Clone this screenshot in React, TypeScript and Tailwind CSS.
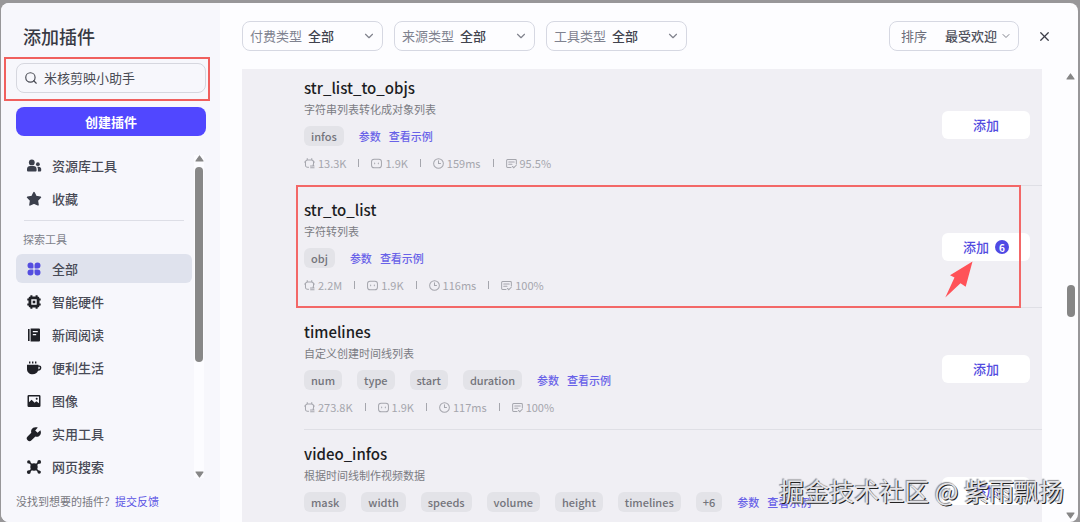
import React, { useState } from "react";
import { ChevronDown, Search, X } from "lucide-react";

type Tool = {
  name: string;
  description: string;
  params: string[];
  stats?: { calls: string; bots: string; latency: string; success: string };
  count?: number;
  marked?: boolean;
};

const tools: Tool[] = [
  {
    name: "str_list_to_objs",
    description: "字符串列表转化成对象列表",
    params: ["infos"],
    stats: { calls: "13.3K", bots: "1.9K", latency: "159ms", success: "95.5%" },
  },
  {
    name: "str_to_list",
    description: "字符转列表",
    params: ["obj"],
    stats: { calls: "2.2M", bots: "1.9K", latency: "116ms", success: "100%" },
    count: 6,
    marked: true,
  },
  {
    name: "timelines",
    description: "自定义创建时间线列表",
    params: ["num", "type", "start", "duration"],
    stats: { calls: "273.8K", bots: "1.9K", latency: "117ms", success: "100%" },
  },
  {
    name: "video_infos",
    description: "根据时间线制作视频数据",
    params: ["mask", "width", "speeds", "volume", "height", "timelines", "+6"],
  },
];

function Glyph({ children }: { children: React.ReactNode }) {
  return (
    <svg viewBox="0 0 16 16" className="size-4 shrink-0" fill="currentColor" aria-hidden="true">
      {children}
    </svg>
  );
}

const icons = {
  team: (
    <Glyph>
      <circle cx="5.8" cy="4.4" r="2.9" />
      <path d="M1 12.400v-1.400C1 9.200 2.400 8.100 4.200 8.100h3.200c1.800 0 3.200 1.100 3.200 2.900v1.400a1 1 0 0 1-1 1H2a1 1 0 0 1-1-1z" />
      <circle cx="11.900" cy="6.200" r="1.900" />
      <path d="M11.900 13.400v-2.400c0-.9-.3-1.600-.7-2.200h1.400c1.500 0 2.600.9 2.600 2.300v1.300a1 1 0 0 1-1 1z" />
    </Glyph>
  ),
  star: (
    <Glyph>
      <path
        d="M8 1.700l2 3.900 4.400.7-3.100 3.200.7 4.300L8 12l-4 1.800.7-4.300L1.600 6.300 6 5.600z"
        stroke="currentColor"
        strokeWidth="1.600"
        strokeLinejoin="round"
      />
    </Glyph>
  ),
  grid: (
    <Glyph>
      <path d="M4.500 1.500a3 3 0 0 1 3 3v2a1 1 0 0 1-1 1h-2a3 3 0 0 1 0-6zM11.500 1.500a3 3 0 0 1 0 6h-2a1 1 0 0 1-1-1v-2a3 3 0 0 1 3-3zM4.500 8.500h2a1 1 0 0 1 1 1v2a3 3 0 1 1-3-3zM9.500 8.500h2a3 3 0 1 1-3 3v-2a1 1 0 0 1 1-1z" />
    </Glyph>
  ),
  chip: (
    <Glyph>
      <path
        fillRule="evenodd"
        d="M4.400 1.300h2v1.200h3.200V1.300h2v1.200a1.900 1.900 0 0 1 1.900 1.900h1.200v2h-1.200v3.200h1.200v2h-1.200a1.900 1.900 0 0 1-1.900 1.900v1.200h-2v-1.200H6.400v1.200h-2v-1.200a1.900 1.900 0 0 1-1.900-1.900H1.300v-2h1.200V6.400H1.300v-2h1.200a1.900 1.900 0 0 1 1.900-1.900zM5.300 5.300v5.400h5.400V5.300z"
      />
      <rect x="6.700" y="6.700" width="2.600" height="2.600" />
    </Glyph>
  ),
  news: (
    <Glyph>
      <path d="M2 2h1.600v12H2z" />
      <path fillRule="evenodd" d="M4.600 1.500h8.400a1 1 0 0 1 1 1v11a1 1 0 0 1-1 1H4.600zM6.800 4v1.300h5V4zM6.800 7v1.300h3.400V7z" />
    </Glyph>
  ),
  cup: (
    <Glyph>
      <path d="M3 1.400h1.400v2H3zM6 1.400h1.400v2H6zM9 1.400h1.400v2H9z" />
      <path
        fillRule="evenodd"
        d="M1 4.800h11.400v.6h1a1.900 1.900 0 0 1 1.900 1.900v.7c0 1.500-1.300 2.700-3.300 2.700-.7 2.200-2.700 3.600-5.300 3.600C3.200 14.300 1 12.200 1 9.300zM12.400 6.800v2.400c.9-.1 1.400-.6 1.400-1.300v-.5c0-.4-.2-.6-.6-.6z"
      />
    </Glyph>
  ),
  image: (
    <Glyph>
      <path
        fillRule="evenodd"
        d="M2.800 2h10.400a1.300 1.300 0 0 1 1.300 1.300v9.400a1.300 1.300 0 0 1-1.300 1.300H2.800a1.300 1.300 0 0 1-1.300-1.300V3.300A1.300 1.300 0 0 1 2.800 2zM3 3.500v5.700l2.600-2.400 3 3 1.700-1.500L13 10.300V3.500z"
      />
      <circle cx="10.700" cy="5.800" r="1" />
    </Glyph>
  ),
  wrench: (
    <Glyph>
      <path d="M14.400 4.200l-2.800 2.600-2.400-2.400 2.600-2.800C9.200.6 6.500 1.400 5.500 3.600c-.5 1.100-.5 2.100-.2 3.100L1.600 10.400a2.600 2.600 0 0 0 3.900 3.900l3.900-3.700c2.100.6 4.300-.4 5.200-2.400.5-1.200.4-2.700-.2-4z" />
    </Glyph>
  ),
  network: (
    <Glyph>
      <path d="M3 3l10 10M13 3L3 13" stroke="currentColor" strokeWidth="1.700" />
      <circle cx="8" cy="8" r="3.700" />
      <circle cx="2.800" cy="2.900" r="1.700" />
      <circle cx="13.200" cy="2.900" r="1.900" />
      <circle cx="2.800" cy="13.100" r="1.900" />
      <circle cx="13.200" cy="13.100" r="1.700" />
    </Glyph>
  ),
};

type IconName = keyof typeof icons;

const library: { label: string; icon: IconName }[] = [
  { label: "资源库工具", icon: "team" },
  { label: "收藏", icon: "star" },
];

const categories: { label: string; icon: IconName }[] = [
  { label: "全部", icon: "grid" },
  { label: "智能硬件", icon: "chip" },
  { label: "新闻阅读", icon: "news" },
  { label: "便利生活", icon: "cup" },
  { label: "图像", icon: "image" },
  { label: "实用工具", icon: "wrench" },
  { label: "网页搜索", icon: "network" },
];

function NavItem({ label, icon, active, onSelect }: { label: string; icon: IconName; active: boolean; onSelect: () => void }) {
  return (
    <li>
      <button
        type="button"
        onClick={onSelect}
        className={
          "flex h-[29px] w-full items-center gap-[10px] rounded-md pl-[10px] text-[13px] font-medium text-[#484a56] " +
          (active ? "bg-[#dfe2ed]" : "")
        }
      >
        <span className={active ? "text-[#544de0]" : icon === "team" || icon === "star" ? "text-[#3b3f4c]" : "text-[#1f2026]"}>{icons[icon]}</span>
        {label}
      </button>
    </li>
  );
}

function Triangle({ down = false }: { down?: boolean }) {
  return (
    <svg viewBox="0 0 9 7" className="h-[7px] w-[9px] shrink-0" fill="#868686" aria-hidden="true">
      <path
        d={down ? "M1 1h7L4.500 6z" : "M1 6h7L4.500 1z"}
        stroke="#868686"
        strokeWidth="1.200"
        strokeLinejoin="round"
      />
    </svg>
  );
}

function Filter({ label }: { label: string }) {
  return (
    <label className="flex h-[30px] w-[141px] items-center rounded-lg border border-[#d6d8e2] pr-[6px] pl-[7px] text-[13px] text-[#7f828f]">
      <span className="shrink-0">{label}</span>
      <select className="ml-[6px] min-w-0 flex-1 appearance-none bg-transparent font-medium text-[#41434e] outline-none">
        <option>全部</option>
      </select>
      <ChevronDown className="size-[14px] shrink-0 text-[#81838d]" strokeWidth={2} />
    </label>
  );
}

type StatKind = "calls" | "bots" | "latency" | "success";

function StatIcon({ kind }: { kind: StatKind }) {
  return (
    <svg viewBox="0 0 12 12" className="size-[11px] shrink-0" fill="none" stroke="currentColor" strokeWidth="1.100" strokeLinecap="round" aria-hidden="true">
      {kind === "calls" && (
        <path d="M3.500.6v1.600M8.500.6v1.600M.6 4.300h1M10.400 4.300h1M5 10.200H3.800a2.200 2.200 0 0 1-2.200-2.200V4.400a2.200 2.200 0 0 1 2.200-2.200h4.400a2.200 2.200 0 0 1 2.200 2.200v2.400M7 8.800h3.800M9.800 7.600l1.200 1.200M11 10.700H7.200" />
      )}
      {kind === "bots" && (
        <>
          <rect x=".6" y="1.300" width="10.800" height="9.300" rx="2.800" />
          <path d="M4 5.400v1M8 5.400v1" />
        </>
      )}
      {kind === "latency" && (
        <>
          <circle cx="6" cy="6" r="5.300" />
          <path d="M6 3v3h2.200" />
        </>
      )}
      {kind === "success" && (
        <path d="M5.500 10.300H1.700a1 1 0 0 1-1-1V2.600a1 1 0 0 1 1-1h8.600a1 1 0 0 1 1 1v4M3 4.300h6M3 6.800h3.500M7 9.200l1.500 1.400 2.700-2.700" />
      )}
    </svg>
  );
}

const statKinds: StatKind[] = ["calls", "bots", "latency", "success"];

function Stats({ stats }: { stats: NonNullable<Tool["stats"]> }) {
  return (
    <ul className="mt-2 flex h-[18px] items-center gap-3 text-[11px] text-[#a5a6ad]">
      {statKinds.map((kind, i) => (
        <React.Fragment key={kind}>
          {i > 0 && <li aria-hidden="true" className="h-2 w-px bg-[#a5a6ad]" />}
          <li className="flex items-center gap-[3px]">
            <StatIcon kind={kind} />
            {stats[kind]}
          </li>
        </React.Fragment>
      ))}
    </ul>
  );
}

function ToolRow({ tool }: { tool: Tool }) {
  return (
    <li className="relative flex items-start border-b border-[#dfdfe5] pt-3 pb-[13px] first:pt-[7px]">
      <div className="min-w-0 flex-1">
        <h2 className="text-[15px] leading-6 font-medium text-[#1c1d23]">{tool.name}</h2>
        <p className="text-[11px] leading-[18px] text-[#7b7c83]">{tool.description}</p>
        <div className="mt-2 flex h-5 items-center gap-[15px]">
          {tool.params.map((param) => (
            <span key={param} className="rounded-md bg-[#e3e3e8] px-[7px] text-[11px] leading-5 font-medium text-[#73747b]">
              {param}
            </span>
          ))}
          <span className="flex gap-2 text-[11px] font-medium text-[#6962e8]">
            <a href="#params">参数</a>
            <a href="#example">查看示例</a>
          </span>
        </div>
        {tool.stats && <Stats stats={tool.stats} />}
      </div>
      <div className="relative mt-[35px] mr-3 shrink-0">
        <button type="button" className="flex h-7 w-[88px] items-center justify-center gap-[6px] rounded-md bg-white text-[13px] font-medium text-[#524be0]">
          添加
          {tool.count !== undefined && (
            <span className="flex size-[14px] items-center justify-center rounded-full bg-[#4f4ae4] text-[10px] font-bold text-white">{tool.count}</span>
          )}
        </button>
        {tool.marked && (
          <svg viewBox="0 0 28 38" className="absolute top-7 left-[3px] h-[38px] w-7" fill="#ff5258" aria-hidden="true">
            <path d="M27.500.5L5 14.300l4.500 2.200L.3 36.500l15.200-14.200 5.200 3.400z" />
          </svg>
        )}
      </div>
      {tool.marked && <div className="pointer-events-none absolute -top-px right-[21px] -bottom-px -left-2 border-2 border-[#f36767]" />}
    </li>
  );
}

export default function App() {
  const [selected, setSelected] = useState("全部");
  return (
    <div className="h-screen overflow-hidden bg-[#989799] pt-[3px] pr-[2px] pl-px font-['Noto_Sans_CJK_SC',sans-serif]">
      <div className="flex h-full overflow-hidden rounded-lg bg-[#fdfdff]">
        <aside className="flex w-[219px] shrink-0 flex-col bg-[#f7f7fc] pr-[14px] pl-[15px]">
          <h1 className="mt-[19px] pl-[7px] text-lg leading-7 font-medium text-[#383a44]">添加插件</h1>
          <div className="relative mt-[13px]">
            <label className="flex h-[30px] items-center gap-[6px] rounded-lg border border-[#d6d7df] px-[7px] text-[#4a4c55]">
              <Search className="size-[14px] shrink-0" strokeWidth={2} />
              <input aria-label="搜索" defaultValue="米核剪映小助手" className="min-w-0 flex-1 bg-transparent text-[13px] outline-none" />
            </label>
            <div className="pointer-events-none absolute -top-[6px] -right-1 -bottom-2 -left-3 border-2 border-[#f0605e]" />
          </div>
          <button type="button" className="mt-[14px] h-[29px] shrink-0 rounded-lg bg-[#5147ff] text-[13px] font-bold text-white">
            创建插件
          </button>
          <div className="mt-[15px] mr-[2px] flex min-h-0 flex-1 gap-[2px]">
            <nav className="min-w-0 flex-1">
              <ul className="flex flex-col gap-1">
                {library.map((item) => (
                  <NavItem key={item.label} {...item} active={selected === item.label} onSelect={() => setSelected(item.label)} />
                ))}
              </ul>
              <hr className="mx-2 mt-[7px] border-[#dddee6]" />
              <h2 className="mt-[9px] mb-[6px] pl-[7px] text-[11px] leading-[18px] text-[#7d7f8a]">探索工具</h2>
              <ul className="flex flex-col gap-1">
                {categories.map((item) => (
                  <NavItem key={item.label} {...item} active={selected === item.label} onSelect={() => setSelected(item.label)} />
                ))}
              </ul>
            </nav>
            <div className="my-1 flex w-[10px] flex-col items-center bg-[#fcfcff]">
              <Triangle />
              <div className="mt-[5px] h-[195px] w-2 rounded-full bg-[#888888]" />
              <div className="flex-1" />
              <Triangle down />
            </div>
          </div>
          <p className="mt-[10px] mb-3 text-[11px] leading-[18px] text-[#777880]">
            没找到想要的插件？
            <a href="#feedback" className="text-[#5a52e4]">提交反馈</a>
          </p>
        </aside>
        <main className="flex min-w-0 flex-1 flex-col pl-[22px]">
          <header className="flex h-[66px] shrink-0 items-center gap-[11px] pr-[26px]">
            <Filter label="付费类型" />
            <Filter label="来源类型" />
            <Filter label="工具类型" />
            <label className="ml-auto flex h-[30px] w-[130px] items-center rounded-lg border border-[#d6d8e2] pr-[6px] pl-[11px] text-[13px] text-[#6a6c78]">
              <span className="shrink-0">排序</span>
              <select className="ml-[18px] min-w-0 flex-1 appearance-none bg-transparent font-medium text-[#50525d] outline-none">
                <option>最受欢迎</option>
              </select>
              <ChevronDown className="size-3 shrink-0 text-[#81838d]" strokeWidth={2} />
            </label>
            <button type="button" aria-label="关闭" className="ml-[7px] text-[#3b3d47]">
              <X className="size-[15px]" strokeWidth={2} />
            </button>
          </header>
          <div className="flex min-h-0 flex-1">
            <div className="min-w-0 flex-1 overflow-hidden bg-[#f0eff4] pl-[62px]">
              <ul>
                {tools.map((tool) => (
                  <ToolRow key={tool.name} tool={tool} />
                ))}
              </ul>
            </div>
            <div className="ml-6 mr-[3px] flex w-[9px] shrink-0 flex-col items-center pt-1 pb-[3px]">
              <Triangle />
              <div className="mt-[205px] h-8 w-2 rounded-full bg-[#868686]" />
              <div className="flex-1" />
              <Triangle down />
            </div>
          </div>
        </main>
      </div>
      <div className="pointer-events-none absolute right-4 bottom-[14px] text-[25px] leading-9 whitespace-nowrap text-[#e4e4e8] [text-shadow:1px_1px_0_#222,-1px_-1px_1px_#8a8a8e]">
        掘金技术社区 @ 紫雨飘扬
      </div>
    </div>
  );
}
